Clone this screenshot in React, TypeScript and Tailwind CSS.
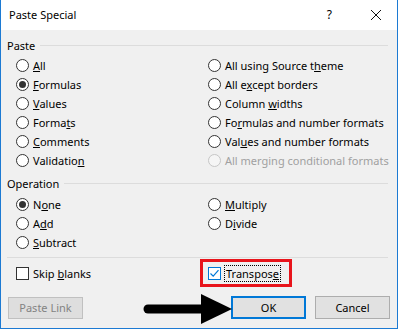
import React from "react";

const font = { fontFamily: '"Noto Sans", "Open Sans", sans-serif' };

function Radio({ checked = false, disabled = false }: { checked?: boolean; disabled?: boolean }) {
  return (
    <span
      className={`w-[13px] h-[13px] rounded-full border flex items-center justify-center shrink-0 ${
        disabled ? "border-[#c6c6c6] bg-[#f5f5f5]" : "border-[#333333] bg-white"
      }`}
    >
      {checked && <span className="w-[7px] h-[7px] rounded-full bg-[#333333]" />}
    </span>
  );
}

function Opt({
  label,
  checked,
  disabled,
}: {
  label: React.ReactNode;
  checked?: boolean;
  disabled?: boolean;
}) {
  return (
    <div className="h-[19px] flex items-center gap-[4px] whitespace-nowrap">
      <Radio checked={checked} disabled={disabled} />
      <span className={disabled ? "text-[#a0a0a0]" : "text-[#000000]"}>{label}</span>
    </div>
  );
}

function GroupHead({ label }: { label: string }) {
  return (
    <div className="h-[16px] flex items-center">
      <span className="text-black">{label}</span>
      <span className="flex-1 h-px bg-[#dcdcdc] ml-[5px] mr-[3px]" />
    </div>
  );
}

export default function App() {
  return (
    <div className="w-[398px] h-[330px] bg-white relative text-[11px] leading-none" style={font}>
      <div className="w-[398px] h-[329px] border-x border-b border-[#1c7ad3] flex flex-col">
        {/* title bar */}
        <div className="h-[30px] bg-white flex items-center pl-[8px] pb-[1px] shrink-0">
          <span className="text-[11px] text-black">Paste Special</span>
          <span className="ml-auto mr-[38px] text-[12px] text-black">?</span>
          <svg width="12" height="12" viewBox="0 0 12 12" className="mr-[15px]">
            <path d="M1 1 L11 11 M11 1 L1 11" stroke="#111" strokeWidth="1" />
          </svg>
        </div>
        {/* body */}
        <div className="flex-1 bg-[#f0f0f0] px-[6px] pt-[7px] flex flex-col">
          <GroupHead label="Paste" />
          <div className="grid grid-cols-[192px_1fr] pl-[9px] mt-[3px]">
            <div className="flex flex-col">
              <Opt label={<><u>A</u>ll</>} />
              <Opt checked label={<><u>F</u>ormulas</>} />
              <Opt label={<><u>V</u>alues</>} />
              <Opt label={<>Forma<u>t</u>s</>} />
              <Opt label={<><u>C</u>omments</>} />
              <Opt label={<>Validatio<u>n</u></>} />
            </div>
            <div className="flex flex-col">
              <Opt label={<>All using Source t<u>h</u>eme</>} />
              <Opt label={<>All e<u>x</u>cept borders</>} />
              <Opt label={<>Column <u>w</u>idths</>} />
              <Opt label={<>Fo<u>r</u>mulas and number formats</>} />
              <Opt label={<>Val<u>u</u>es and number formats</>} />
              <Opt disabled label="All merging conditional formats" />
            </div>
          </div>
          <div className="mt-[5px]">
            <GroupHead label="Operation" />
          </div>
          <div className="grid grid-cols-[192px_1fr] pl-[9px] mt-[4px]">
            <div className="flex flex-col">
              <Opt checked label={<>N<u>o</u>ne</>} />
              <Opt label={<>A<u>d</u>d</>} />
              <Opt label={<><u>S</u>ubtract</>} />
            </div>
            <div className="flex flex-col">
              <Opt label={<><u>M</u>ultiply</>} />
              <Opt label={<>D<u>i</u>vide</>} />
            </div>
          </div>
          <div className="h-px bg-[#dcdcdc] mt-[5px] mr-[3px]" />
          <div className="grid grid-cols-[192px_1fr] pl-[9px] mt-[6px]">
            <div className="h-[19px] flex items-center gap-[4px] whitespace-nowrap">
              <span className="w-[13px] h-[13px] border border-[#333333] bg-white shrink-0" />
              <span className="text-black">
                Skip <u>b</u>lanks
              </span>
            </div>
            <div className="h-[19px] flex items-center gap-[3px] relative whitespace-nowrap">
              <span className="w-[13px] h-[13px] border border-[#0078d7] bg-white shrink-0 flex items-center justify-center">
                <svg width="11" height="11" viewBox="0 0 11 11">
                  <path d="M1.5 5.5 L4.2 8.2 L9.5 2.2" stroke="#0078d7" strokeWidth="1.2" fill="none" />
                </svg>
              </span>
              <span className="text-black border border-dotted border-black px-[1px] py-[2px]">
                Transpos<u>e</u>
              </span>
              <span className="absolute left-[-8px] top-[-5px] w-[92px] h-[28px] border-[3px] border-[#e8141b]" />
            </div>
          </div>
          <div className="flex items-center mt-[13px] mr-[1px]">
            <div className="w-[75px] h-[22px] border border-[#c0c0c0] bg-[#dedede] flex items-center justify-center text-[#838383] ml-[1px]">
              Paste Link
            </div>
            <div className="ml-auto w-[75px] h-[23px] border-2 border-[#0078d7] bg-[#e1e1e1] flex items-center justify-center text-black">
              OK
            </div>
            <div className="ml-[9px] w-[75px] h-[23px] border border-[#adadad] bg-[#e1e1e1] flex items-center justify-center text-black">
              Cancel
            </div>
          </div>
        </div>
      </div>
      {/* arrow annotation */}
      <svg className="absolute left-[140px] top-[292px]" width="96" height="36" viewBox="0 0 96 36">
        <line x1="8" y1="17" x2="64" y2="17" stroke="#000" strokeWidth="9" strokeLinecap="round" />
        <polygon points="61,2 92,17 61,32" fill="#000" />
      </svg>
    </div>
  );
}
